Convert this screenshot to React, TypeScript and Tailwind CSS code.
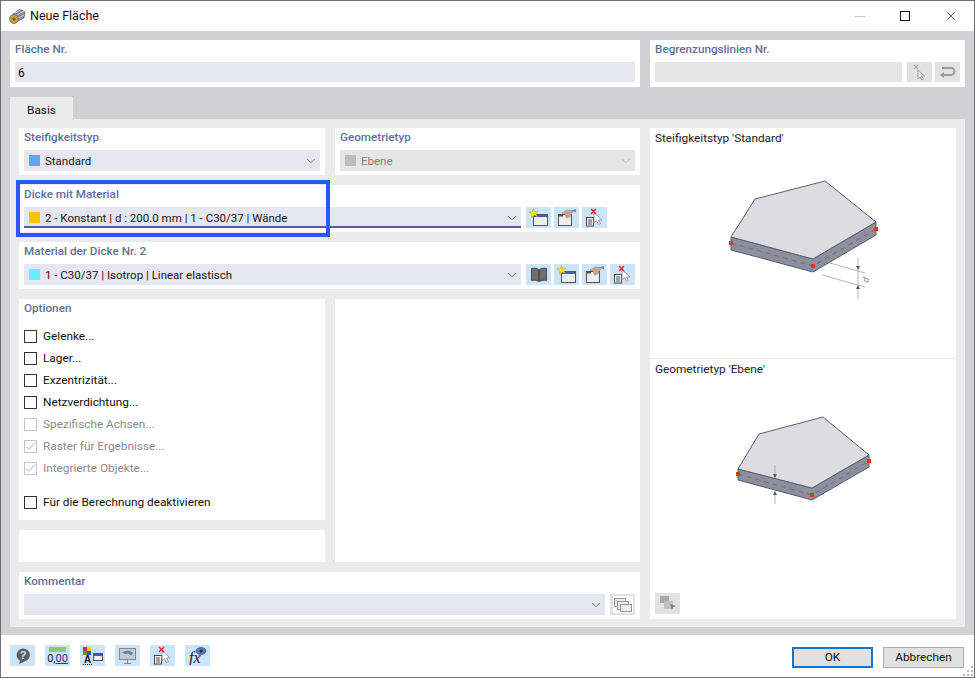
import type { ReactNode } from "react";
import { ChevronDown, X } from "lucide-react";

const labelCls = "h-[22px] pl-[5px] pt-[1px] text-[11.7px] leading-[17px] font-medium text-[#62709b]";

function Card({ label, className = "", children }: { label?: string; className?: string; children?: ReactNode }) {
  return (
    <div className={`bg-white ${className}`}>
      {label && <div className={labelCls}>{label}</div>}
      {children}
    </div>
  );
}

function Select({ color, text, disabled, active, className = "" }: { color?: string; text?: string; disabled?: boolean; active?: boolean; className?: string }) {
  return (
    <div
      className={`h-[21px] flex items-center pl-[5px] pr-[2px] gap-[5px] text-[11.5px] ${disabled ? "bg-[#e5e5e5] text-[#7d7d7d]" : "bg-[#e6e6f0] text-[#1a1a1a]"} ${active ? "shadow-[inset_0_-2px_0_#5b5b9b]" : ""} ${className}`}
    >
      {color && <span className={`w-[11px] h-[11px] shrink-0 ${color}`} />}
      <span className="flex-1 whitespace-nowrap pt-[2px]">{text}</span>
      <ChevronDown className={`w-[14px] h-[14px] ${disabled ? "text-[#b5b5b5]" : "text-[#444]"}`} strokeWidth={1.2} />
    </div>
  );
}

function Btn({ children, gray }: { children?: ReactNode; gray?: boolean }) {
  return (
    <div className={`w-[25px] h-[21px] shrink-0 flex items-center justify-center ${gray ? "bg-[#e2e2e2]" : "bg-[#cce4f7]"}`}>
      {children}
    </div>
  );
}

function NewIcon() {
  return (
    <svg width="21" height="19" viewBox="0 0 21 19">
      <rect x="5.500" y="6.500" width="14" height="11" fill="#eeeeee" stroke="#555" />
      <rect x="6" y="7" width="13" height="2" fill="#3f5fc0" />
      <path d="M5.500 0.500l1.200 3 3.300-.5-2.200 2.500 1.700 3-3.200-1.200-2.800 2 .4-3.300L1 4l3.200-.2z" fill="#f7ea12" stroke="#8a8a2a" strokeWidth="0.400" />
    </svg>
  );
}

function EditIcon() {
  return (
    <svg width="21" height="19" viewBox="0 0 21 19">
      <rect x="2.500" y="6.500" width="13" height="11" fill="#eeeeee" stroke="#555" />
      <rect x="3" y="7" width="4" height="1.500" fill="#555" />
      <path d="M6 5l5-3h4l2 2-2 2-1 3-3.500 1-1.500-4z" fill="#c9a68f" stroke="#9a8270" strokeWidth="0.500" />
      <path d="M15 2.500l5-1.500v3.500z" fill="#5c8fd0" />
    </svg>
  );
}

function DeleteIcon() {
  return (
    <svg width="21" height="19" viewBox="0 0 21 19">
      <rect x="2.500" y="9.500" width="7" height="8.500" fill="#fff" stroke="#444" />
      <path d="M4 12h4M4 14h4M4 16h4" stroke="#444" />
      <path d="M10 4.500v10l2.500-2 2 4 2-1-2-3.500h3.500z" fill="#fff" stroke="#999" />
      <path d="M7 1l5 5M12 1L7 6" stroke="#e8202a" strokeWidth="1.400" />
    </svg>
  );
}

function BookIcon() {
  return (
    <svg width="18" height="16" viewBox="0 0 18 16">
      <path d="M1.500 1.500c2.500-.5 5-.5 7 1v12c-2-1.500-4.500-1.500-7-1z" fill="#6e6e6e" stroke="#4a4a4a" />
      <path d="M16.500 1.500c-2.500-.5-5-.5-7 1v12c2-1.500 4.500-1.500 7-1z" fill="#6e6e6e" stroke="#4a4a4a" />
    </svg>
  );
}

function Plate({ box, top, bottom, dots, dim }: { box: string; top: string; bottom: string; dots: number[][]; dim?: ReactNode }) {
  return (
    <svg viewBox={box} className="w-full h-full">
      <path d={bottom} fill="#8e8e9e" stroke="#5c5c70" strokeWidth="1" strokeLinejoin="round" />
      <path d={top} fill="#dddde1" stroke="#5c5c70" strokeWidth="1" strokeLinejoin="round" />
      <path d={`M${dots[0][0]} ${dots[0][1]}L${dots[1][0]} ${dots[1][1]}L${dots[2][0]} ${dots[2][1]}`} fill="none" stroke="#5c5c70" strokeWidth="0.7" strokeDasharray="5 4" />
      {dots.map((d) => (
        <rect key={d[0]} x={d[0] - 2} y={d[1] - 2} width="4" height="4" fill="#d93a08" />
      ))}
      {dim}
    </svg>
  );
}

function Check({ label, state }: { label: string; state?: "off" | "on" }) {
  const dim = state !== undefined;
  return (
    <div className="h-[22px] flex items-center pl-[5px] gap-[6px]">
      <span className={`w-[13px] h-[13px] border flex items-center justify-center ${dim ? "border-[#c4c4c4]" : "border-[#333]"}`}>
        {state === "on" && (
          <svg width="11" height="11" viewBox="0 0 11 11">
            <path d="M1 5.500l3 3 6-7" fill="none" stroke="#b5b5b5" strokeWidth="1" />
          </svg>
        )}
      </span>
      <span className={`pt-[1px] text-[11.8px] whitespace-nowrap ${dim ? "text-[#8a8a8a]" : "text-[#111]"}`}>{label}</span>
    </div>
  );
}

export default function App() {
  return (
    <div className="relative w-[975px] h-[678px] flex flex-col border border-[#6f6f6f] bg-white overflow-hidden font-['Roboto',sans-serif]">
      {/* Title bar */}
      <div className="h-[30px] shrink-0 flex items-center pl-[8px]">
        <svg width="17" height="16" viewBox="0 0 17 16">
          <path d="M3 7l8-6 5 3-1 6-8 4z" fill="#7f8aa0" stroke="#444" strokeWidth="0.6" />
          <path d="M6 5l7-4M8 7l7-4M9 10l6-3" stroke="#d5d8e0" />
          <circle cx="5" cy="11" r="4.500" fill="#c6a23a" stroke="#555" strokeWidth="0.6" />
          <circle cx="5" cy="11" r="1.500" fill="#6a5a20" />
        </svg>
        <span className="ml-[4px] text-[12.500px] text-[#111]">Neue Fläche</span>
        <div className="ml-auto flex items-center">
          <span className="w-[10px] h-px bg-[#c8c8c8]" />
          <span className="ml-[35px] w-[10px] h-[10px] border border-[#111]" />
          <X className="ml-[34px] mr-[16px] w-[14px] h-[14px] text-[#222]" strokeWidth={1.2} />
        </div>
      </div>

      {/* Body */}
      <div className="h-[604px] shrink-0 bg-[#d0d0d5] px-[9px] pt-[9px]">
        <div className="flex gap-[10px]">
          <Card label="Fläche Nr." className="w-[630px] h-[47px]">
            <div className="mx-[5px] h-[20px] bg-[#e6e6f0] pl-[3px] pt-[1px] text-[12px] leading-[20px] text-[#111]">6</div>
          </Card>
          <Card label="Begrenzungslinien Nr." className="w-[315px] h-[47px]">
            <div className="flex mx-[5px]">
              <div className="w-[247px] h-[20px] bg-[#e5e5e5]" />
              <div className="ml-[5px]">
                <div className="w-[25px] h-[20px] bg-[#e2e2e2] flex items-center justify-center">
                  <svg width="16" height="17" viewBox="0 0 16 17">
                    <path d="M6 6v9l2-2 2 3 1.500-1-2-3h3z" fill="#f5f5f5" stroke="#999" />
                    <path d="M2 1l4 4M6 1L2 5" stroke="#aaa" strokeWidth="1.200" />
                  </svg>
                </div>
              </div>
              <div className="ml-[3px] w-[25px] h-[20px] bg-[#e2e2e2] flex items-center justify-center">
                <svg width="17" height="14" viewBox="0 0 17 14">
                  <path d="M5 11h7a3.500 3.500 0 0 0 0-7H3" transform="translate(0 -1)" fill="none" stroke="#9a9a9a" strokeWidth="1.800" />
                  <path d="M1 10l4-3v6z" fill="#9a9a9a" />
                </svg>
              </div>
            </div>
          </Card>
        </div>

        {/* Tab */}
        <div className="mt-[10px] w-[63px] h-[22px] bg-[#ebebeb] pt-[2px] text-[11.8px] leading-[22px] text-center text-[#111]">Basis</div>

        {/* Panel */}
        <div className="h-[508px] bg-[#ebebeb] pl-[9px] pr-[9px] pt-[9px] flex gap-[10px]">
          <div className="w-[621px] flex flex-col gap-[10px]">
            <div className="flex gap-[10px]">
              <Card label="Steifigkeitstyp" className="w-[306px] h-[47px]">
                <Select color="bg-[#5aa9ff]" text="Standard" className="mx-[5px]" />
              </Card>
              <Card label="Geometrietyp" className="w-[305px] h-[47px]">
                <Select color="bg-[#bdbdbd]" text="Ebene" disabled className="mx-[5px]" />
              </Card>
            </div>
            <Card label="Dicke mit Material" className="h-[47px]">
              <div className="flex mx-[5px]">
                <Select color="bg-[#f5c400]" text="2 - Konstant | d : 200.0 mm | 1 - C30/37 | Wände" active className="w-[497px]" />
                <div className="ml-[5px] flex gap-[3px]">
                  <Btn><NewIcon /></Btn>
                  <Btn><EditIcon /></Btn>
                  <Btn><DeleteIcon /></Btn>
                </div>
              </div>
            </Card>
            <Card label="Material der Dicke Nr. 2" className="h-[47px]">
              <div className="flex mx-[5px]">
                <Select color="bg-[#66f0f5]" text="1 - C30/37 | Isotrop | Linear elastisch" className="w-[497px]" />
                <div className="ml-[5px] flex gap-[3px]">
                  <Btn><BookIcon /></Btn>
                  <Btn><NewIcon /></Btn>
                  <Btn><EditIcon /></Btn>
                  <Btn><DeleteIcon /></Btn>
                </div>
              </div>
            </Card>
            <div className="flex gap-[10px]">
              <div className="w-[306px] flex flex-col gap-[10px]">
                <Card label="Optionen" className="h-[221px]">
                  <div className="pt-[4px]">
                    <Check label="Gelenke..." />
                    <Check label="Lager..." />
                    <Check label="Exzentrizität..." />
                    <Check label="Netzverdichtung..." />
                    <Check label="Spezifische Achsen..." state="off" />
                    <Check label="Raster für Ergebnisse..." state="on" />
                    <Check label="Integrierte Objekte..." state="on" />
                    <div className="h-[12px]" />
                    <Check label="Für die Berechnung deaktivieren" />
                  </div>
                </Card>
                <Card className="h-[32px]" />
              </div>
              <Card className="w-[305px] h-[263px]" />
            </div>
            <Card label="Kommentar" className="h-[47px]">
              <div className="flex mx-[5px]">
                <Select className="w-[581px]" />
                <div className="ml-[5px]">
                  <Btn gray>
                    <svg width="20" height="17" viewBox="0 0 20 17" className="bg-white">
                      <rect x="1.500" y="2.500" width="11" height="8" fill="#eee" stroke="#999" />
                      <rect x="4.500" y="5.500" width="11" height="8" fill="#eee" stroke="#999" />
                      <rect x="7.500" y="8.500" width="11" height="7" fill="#eee" stroke="#999" />
                    </svg>
                  </Btn>
                </div>
              </div>
            </Card>
          </div>

          {/* Preview */}
          <div className="w-[306px] h-[491px] bg-white flex flex-col">
            <div className="h-[231px] border-b border-[#e6e6e6] flex flex-col">
              <div className="pl-[5px] text-[11.8px] leading-[20px] text-[#222]">Steifigkeitstyp 'Standard'</div>
              <div className="h-[160px] mt-[2px]">
                <Plate
                  box="650 150 306 160"
                  top="M755 199L825 181L876 222L813 259L731 237Z"
                  bottom="M731 237L813 259L876 222V235L813 272L731 250Z"
                  dots={[[731, 243], [813, 266], [876, 229]]}
                  dim={
                    <g stroke="#9a9aa5" strokeWidth="0.700" fill="#55556a">
                      <path d="M830 263L865 273M822 275L865 287M858 257V299" fill="none" />
                      <path d="M856 266h4l-2 4z" stroke="none" />
                      <path d="M856 289h4l-2-4z" stroke="none" />
                      <text x="0" y="0" fontSize="9" fontStyle="italic" fill="#888" stroke="none" transform="translate(868 283) rotate(-75)">d</text>
                    </g>
                  }
                />
              </div>
            </div>
            <div className="pl-[5px] text-[11.8px] leading-[20px] text-[#222]">Geometrietyp 'Ebene'</div>
            <div className="h-[100px] mt-[31px]">
              <Plate
                box="650 410 306 100"
                top="M759 434L823 417L869 455L812 488L738 469Z"
                bottom="M738 469L812 488L869 455V467L812 500L738 480Z"
                dots={[[738, 474], [812, 495], [869, 461]]}
                dim={
                  <g stroke="#9a9aa5" strokeWidth="0.700" fill="#55556a">
                    <path d="M775 465V478M775 491V504" fill="none" />
                    <path d="M773 474h4l-2 4z" stroke="none" />
                    <path d="M773 495h4l-2-4z" stroke="none" />
                  </g>
                }
              />
            </div>
            <div className="mt-auto mb-[5px] ml-[5px]">
              <Btn gray>
                <svg width="20" height="17" viewBox="0 0 20 17">
                  <rect x="2" y="1" width="9" height="7" fill="#a8a8a8" />
                  <rect x="6" y="6" width="9" height="8" fill="#c0c0c0" />
                  <path d="M12 9l6 2-3 1-1 3z" fill="#777" />
                </svg>
              </Btn>
            </div>
          </div>
        </div>
      </div>

      {/* Footer */}
      <div className="flex-1 flex items-center pl-[9px] pr-[10px] pb-[1px]">
        <div className="flex gap-[10px]">
          <Btn>
            <svg width="20" height="18" viewBox="0 0 20 18">
              <path d="M10 1.500a7 6.500 0 0 1 2 12.700L6 17l1-3.500A7 6.500 0 0 1 10 1.500z" fill="#5e5e66" />
              <text x="10" y="12" textAnchor="middle" fontSize="11" fontWeight="700" fill="#cce4f7" fontFamily="Liberation Sans, sans-serif">?</text>
            </svg>
          </Btn>
          <Btn>
            <div className="w-[21px] flex flex-col items-center">
              <div className="w-[17px] h-[5px] bg-[#8fc96a]" />
              <div className="text-[11px] leading-[13px] text-[#222]">0,<span className="underline text-[#1c3a8a]">00</span></div>
            </div>
          </Btn>
          <Btn>
            <svg width="21" height="19" viewBox="0 0 21 19">
              <rect x="1" y="1" width="4" height="4" fill="#d9302a" />
              <rect x="5" y="1" width="4" height="4" fill="#e8d820" />
              <rect x="1" y="5" width="4" height="4" fill="#3aa53a" />
              <rect x="5" y="5" width="4" height="4" fill="#2a55c8" />
              <rect x="11.500" y="7.500" width="9" height="7" fill="#eee" stroke="#555" />
              <rect x="12" y="8" width="8" height="2" fill="#3f5fc0" />
              <text x="5.500" y="17" textAnchor="middle" fontSize="10" fontWeight="700" fill="#222" fontFamily="Liberation Sans, sans-serif">A</text>
              <path d="M1 18.500h10" stroke="#222" strokeDasharray="1 1" />
            </svg>
          </Btn>
          <Btn>
            <svg width="20" height="18" viewBox="0 0 20 18">
              <rect x="1.500" y="1.500" width="16" height="11" fill="#c6ccd4" stroke="#808890" />
              <path d="M4 6c3-3 8-3 11 0l-2 3c-1-2-3-3-5-2z" fill="#5d83b0" />
              <path d="M9.500 13v3M6 16.500h7" stroke="#808890" />
            </svg>
          </Btn>
          <Btn><DeleteIcon /></Btn>
          <Btn>
            <svg width="21" height="19" viewBox="0 0 21 19">
              <text x="2" y="17" fontSize="16" fontStyle="italic" fill="#222" fontFamily="Liberation Serif, serif">fx</text>
              <ellipse cx="14" cy="5" rx="5" ry="3.500" fill="#5a78b8" stroke="#2c3f70" strokeWidth="0.600" />
              <circle cx="14" cy="5" r="1.500" fill="#1c2a50" />
            </svg>
          </Btn>
        </div>
        <div className="ml-auto flex gap-[10px] mt-[3px]">
          <div className="w-[81px] h-[21px] border-2 border-[#0078d7] bg-[#e1e1e1] text-[11.8px] leading-[17px] text-center text-[#111]">OK</div>
          <div className="w-[81px] h-[21px] border border-[#adadad] bg-[#e1e1e1] text-[11.8px] leading-[19px] text-center text-[#111]">Abbrechen</div>
        </div>
      </div>

      {/* Highlight over the thickness row */}
      <div className="absolute left-[15px] top-[179px] w-[314px] h-[57px] border-4 border-[#2a58f5]" />

      {/* Resize grip */}
      <svg width="12" height="12" viewBox="0 0 12 12" className="absolute right-0 bottom-0">
        <path d="M9 1h2v2H9zM5 5h2v2H5zM9 5h2v2H9zM1 9h2v2H1zM5 9h2v2H5zM9 9h2v2H9z" fill="#b8b8b8" />
      </svg>
    </div>
  );
}
